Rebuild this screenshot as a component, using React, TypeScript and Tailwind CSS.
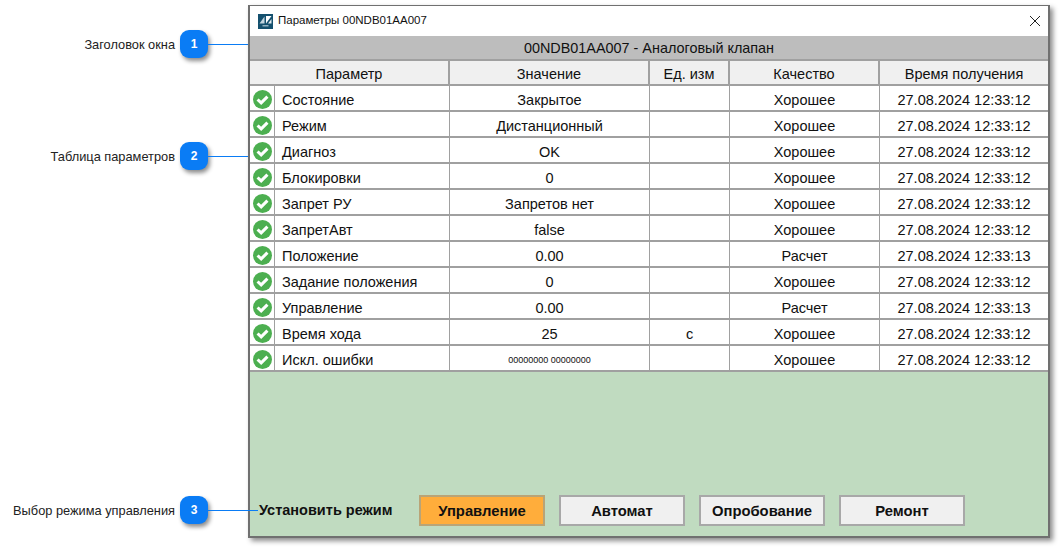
const rows = [
  { name: "Состояние", value: "Закрытое", unit: "", quality: "Хорошее", time: "27.08.2024 12:33:12" },
  { name: "Режим", value: "Дистанционный", unit: "", quality: "Хорошее", time: "27.08.2024 12:33:12" },
  { name: "Диагноз", value: "OK", unit: "", quality: "Хорошее", time: "27.08.2024 12:33:12" },
  { name: "Блокировки", value: "0", unit: "", quality: "Хорошее", time: "27.08.2024 12:33:12" },
  { name: "Запрет РУ", value: "Запретов нет", unit: "", quality: "Хорошее", time: "27.08.2024 12:33:12" },
  { name: "ЗапретАвт", value: "false", unit: "", quality: "Хорошее", time: "27.08.2024 12:33:12" },
  { name: "Положение", value: "0.00", unit: "", quality: "Расчет", time: "27.08.2024 12:33:13" },
  { name: "Задание положения", value: "0", unit: "", quality: "Хорошее", time: "27.08.2024 12:33:12" },
  { name: "Управление", value: "0.00", unit: "", quality: "Расчет", time: "27.08.2024 12:33:13" },
  { name: "Время хода", value: "25", unit: "с", quality: "Хорошее", time: "27.08.2024 12:33:12" },
  { name: "Искл. ошибки", value: "00000000 00000000", unit: "", quality: "Хорошее", time: "27.08.2024 12:33:12", small: true },
];

const gridCols = "grid grid-cols-[25px_175px_200px_80px_150px_1fr]";

const CheckIcon = () => (
  <svg width="19" height="19" viewBox="0 0 20 20" className="mt-[2px]">
    <circle cx="10" cy="10" r="10" fill="#4caf50" />
    <path d="M4.8 10 L8.6 13.6 L15.2 7" fill="none" stroke="#fff" strokeWidth="3.2" />
  </svg>
);

const Logo = () => (
  <svg width="15" height="15" viewBox="0 0 15 15">
    <rect width="15" height="15" fill="#14506e" />
    <path d="M1.5 9.5 L6.5 2.5 V9.5 Z" fill="#c4d6df" />
    <path d="M8 2 H13.5 L8 9.5 Z" fill="#ffffff" />
    <path d="M10 9.5 L13.5 5 V9.5 Z" fill="#e3ecf0" />
    <rect x="4.5" y="11" width="6" height="1.5" fill="#8fb0c0" />
  </svg>
);

const Callout = ({ n, label, className, lineClass }: { n: number; label: string; className: string; lineClass: string }) => (
  <div className={`flex items-center justify-end ${className}`}>
    <span className="mr-[5px] pt-[1px] text-[12.8px] text-[#222]">{label}</span>
    <div className="flex h-[28px] w-[28px] items-center justify-center rounded-[9px] bg-[#0a7cf5] text-[12px] font-bold text-white shadow-[2px_3px_4px_rgba(0,0,0,0.45)]">
      {n}
    </div>
    <div className={`h-px bg-[#0a7cf5] ${lineClass}`} />
  </div>
);

const ModeButton = ({ label, active }: { label: string; active?: boolean }) => (
  <button
    className={`h-[31px] w-[126px] border-2 pt-[1px] text-[14.8px] font-bold text-[#111] ${
      active ? "border-[#b9a477] bg-[#ffad3b]" : "border-[#a8a8a8] bg-[#f0f0f0]"
    }`}
  >
    {label}
  </button>
);

export default function App() {
  return (
    <div className="flex h-[547px] w-[1063px] bg-white font-['Liberation_Sans',sans-serif]">
      <div className="flex w-[248px] shrink-0 flex-col">
        <Callout n={1} label="Заголовок окна" lineClass="w-[40px]" className="mt-[30px]" />
        <Callout n={2} label="Таблица параметров" lineClass="w-[40px]" className="mt-[84px]" />
        <Callout n={3} label="Выбор режима управления" lineClass="w-[50px]" className="relative z-10 mt-[326px] -mr-[10px]" />
      </div>

      <div className="mt-[5px] flex h-[533px] w-[802px] flex-col border-2 border-t-[1px] border-[#707070] bg-[#c0dbc0] shadow-[3px_3px_5px_rgba(0,0,0,0.45)]">
        <div className="flex h-[30px] shrink-0 items-center bg-white pl-[8px] pr-[7px] text-[11.5px] text-[#111]">
          <Logo />
          <span className="ml-[5px] grow">Параметры 00NDB01AA007</span>
          <svg width="12" height="12" viewBox="0 0 12 12" stroke="#222" strokeWidth="1">
            <path d="M1 1 L11 11 M11 1 L1 11" />
          </svg>
        </div>

        <div className="flex h-[25px] shrink-0 items-center justify-center border-b-2 border-[#a0a0a0] bg-[#bdbdbd] pt-[3px] text-[14.4px] text-[#111]">
          00NDB01AA007 - Аналоговый клапан
        </div>

        <div className={`${gridCols} h-[25px] shrink-0 border-b-2 border-[#a0a0a0] bg-[#f0f0f0] text-center text-[14.5px] leading-[19px] text-[#111]`}>
          <div className="col-span-2 border-r-2 border-[#a0a0a0] pt-[4px]">Параметр</div>
          <div className="border-r-2 border-[#a0a0a0] pt-[4px]">Значение</div>
          <div className="border-r-2 border-[#a0a0a0] pt-[4px]">Ед. изм</div>
          <div className="border-r-2 border-[#a0a0a0] pt-[4px]">Качество</div>
          <div className="pt-[4px]">Время получения</div>
        </div>

        {rows.map((row) => (
          <div key={row.name} className={`${gridCols} h-[26px] shrink-0 border-b-2 border-[#a0a0a0] bg-white text-center text-[14.5px] leading-[20px] text-[#111]`}>
            <div className="flex items-center justify-center border-r border-[#a0a0a0]">
              <CheckIcon />
            </div>
            <div className="border-r border-[#a0a0a0] pt-[4px] pl-[7px] text-left">{row.name}</div>
            <div className={`border-r border-[#a0a0a0] pt-[4px] ${row.small ? "text-[9px]" : ""}`}>{row.value}</div>
            <div className="border-r border-[#a0a0a0] pt-[4px]">{row.unit}</div>
            <div className="border-r border-[#a0a0a0] pt-[4px]">{row.quality}</div>
            <div className="pt-[4px]">{row.time}</div>
          </div>
        ))}

        <div className="mt-auto mb-[10px] flex items-center gap-[14px] pl-[9px]">
          <span className="w-[146px] pt-[1px] text-[14.5px] font-bold text-[#111]">Установить режим</span>
          <ModeButton label="Управление" active />
          <ModeButton label="Автомат" />
          <ModeButton label="Опробование" />
          <ModeButton label="Ремонт" />
        </div>
      </div>
    </div>
  );
}
